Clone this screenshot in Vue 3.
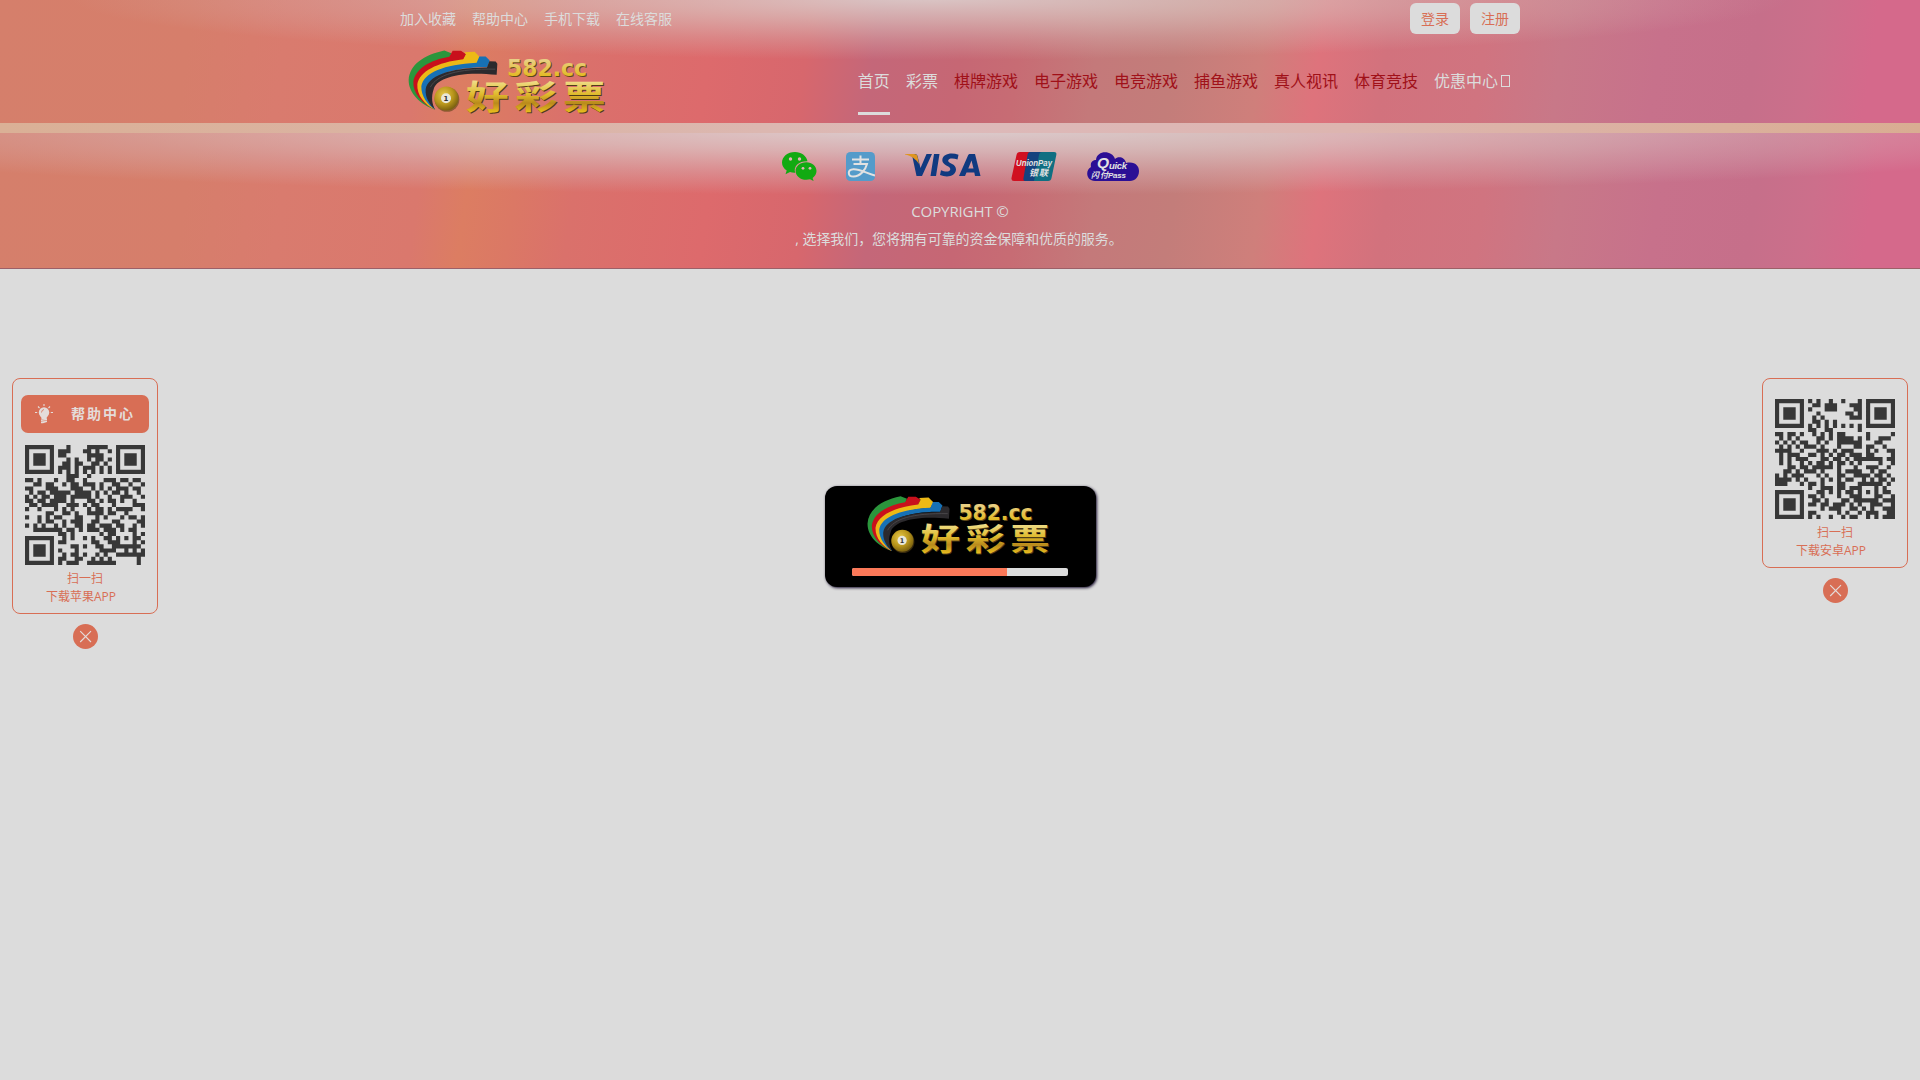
<script setup>
import { h } from 'vue'

const topLinks = ['加入收藏', '帮助中心', '手机下载', '在线客服']
const navItems = [
  { label: '首页', active: true },
  { label: '彩票' },
  { label: '棋牌游戏', hot: true },
  { label: '电子游戏', hot: true },
  { label: '电竞游戏', hot: true },
  { label: '捕鱼游戏', hot: true },
  { label: '真人视讯', hot: true },
  { label: '体育竞技', hot: true },
  { label: '优惠中心', more: true }
]

const iosCode = [
  '11111110001000011111001111111',
  '10000010111000110100101000001',
  '10111010110000011110001011101',
  '10111010001010010110101011101',
  '10111010011011001101001011101',
  '10000010111010111010101000001',
  '11111110101010101010101111111',
  '00000000001110010000000000000',
  '11010001001100100001110110110',
  '00110110010110111010011001001',
  '11000111000111001010101110110',
  '01011011111011110101011010010',
  '10101101110111110100100111001',
  '11011011110100011010110100100',
  '01101111001110101100010000111',
  '10010001010100010110101111001',
  '00000110011010011110110010000',
  '10010101100011000101000101101',
  '00010110010111001100011000011',
  '10101001010011011011101100101',
  '00111111101101011101110101100',
  '00000000110100000010110000101',
  '11111110010100101001101010110',
  '10000010110000001100111000101',
  '10111010000110100110011111110',
  '10111010100010000011110010101',
  '10111010010110100101001111111',
  '10000010110011001010100000010',
  '11111110101110011111110000010'
]
const androidCode = [
  '11111110101001001000101111111',
  '10000010011011100011101000001',
  '10111010100011100001101011101',
  '10111010001000000110101011101',
  '10111010010100000011101011101',
  '10000010011010100000001000001',
  '11111110101010101010101111111',
  '00000000110011000000100000000',
  '11011010010101011000001000001',
  '01010100001101011110101001110',
  '10101011001010011111100011000',
  '01010101110100010001101100100',
  '11110010001110101110001010011',
  '01011100110101011011101100001',
  '01010111000110110101111111011',
  '01010010101101011010100001001',
  '00011011011111010001001110010',
  '00110101110100010111100101100',
  '10101110001010011001111011010',
  '11110101000101010110010101101',
  '11100010110100011000111111010',
  '00000000100111011011100010100',
  '11111110001101010110101010110',
  '10000010110100010011100011001',
  '10111010011010001101111110111',
  '10111010110110111010100111001',
  '10111010000101110011010100111',
  '10000010110000010100101110011',
  '11111110101001001011001010111'
]

const toPath = (rows) =>
  rows
    .flatMap((row, y) => [...row].map((c, x) => (c === '1' ? `M${x} ${y}h1v1h-1z` : '')))
    .join('')

const QrCode = (props) =>
  h('svg', { viewBox: '0 0 29 29', width: 120, height: 120, style: 'display:block' }, [
    h('path', { d: toPath(props.rows), fill: '#383838' })
  ])
QrCode.props = ['rows']
</script>

<template>
  <div class="page">
    <svg class="defs" width="0" height="0">
      <defs>
        <linearGradient id="gold" x1="0" y1="0" x2="0" y2="1">
          <stop offset=".15" stop-color="#f3e6a0" />
          <stop offset=".5" stop-color="#dfba2c" />
          <stop offset=".68" stop-color="#b98a1c" />
          <stop offset=".9" stop-color="#efc51f" />
        </linearGradient>
        <linearGradient id="goldNum" x1="0" y1="0" x2="0" y2="1">
          <stop offset=".2" stop-color="#e8cf83" />
          <stop offset=".9" stop-color="#e2b50f" />
        </linearGradient>
        <radialGradient id="ball" cx=".4" cy=".35" r=".65">
          <stop offset="0" stop-color="#e6c84a" />
          <stop offset=".6" stop-color="#b8951b" />
          <stop offset="1" stop-color="#7d6310" />
        </radialGradient>
        <symbol id="brand" viewBox="80 148 600 197">
          <path fill="#2b963c" d="M165 330C120 315 84 280 85 240C88 195 130 165 192 152L213 160L206 178C150 190 110 220 112 250C115 290 140 315 165 330Z" />
          <path fill="#c9101c" d="M165 330C125 312 97 280 99 246C104 208 150 180 207 171L217 153L242 153L257 163L248 182C180 190 122 220 124 252C126 290 145 315 165 330Z" />
          <path fill="#edb916" d="M165 330C132 314 109 285 111 253C117 215 170 187 249 178L257 163L252 157L283 156L299 172L289 190C200 194 138 222 137 254C136 290 150 315 165 330Z" />
          <path fill="#1771b5" d="M165 330C142 314 122 290 123 259C131 219 190 194 289 189L297 170L316 170L328 182L321 202C220 200 150 228 148 260C147 290 155 315 165 330Z" />
          <path fill="#2c2a2d" d="M165 330C148 314 134 294 136 268C144 230 200 204 320 203L327 184L346 185L351 192L349 225C230 212 167 238 160 268C152 290 155 315 165 330Z" />
          <path fill="none" stroke="#4a484b" stroke-width="3" d="M150 262C170 225 230 206 345 208" />
          <circle cx="200" cy="299" r="37" fill="#5b4416" opacity=".6" />
          <circle cx="198" cy="296" r="36" fill="url(#ball)" />
          <circle cx="197" cy="295" r="15" fill="#e9e7da" />
          <text x="197" y="303" text-anchor="middle" font-family="'DejaVu Sans'" font-weight="700" font-size="21" fill="#333">1</text>
          <g font-family="'DejaVu Sans', sans-serif" font-weight="700" font-size="70">
            <text x="383" y="233" textLength="240" lengthAdjust="spacingAndGlyphs" fill="#5c4718">582.cc</text>
            <text x="380" y="230" textLength="240" lengthAdjust="spacingAndGlyphs" fill="url(#goldNum)">582.cc</text>
          </g>
          <g font-family="'Noto Sans CJK SC', sans-serif" font-weight="700" font-size="100">
            <text transform="translate(3 3) scale(1.28 1)" x="201 315 428" y="327" fill="#4f3c18">好彩票</text>
            <text transform="scale(1.28 1)" x="201 315 428" y="327" fill="url(#gold)">好彩票</text>
          </g>
        </symbol>
      </defs>
    </svg>

    <header class="header art">
      <div class="wrap topbar">
        <div class="links">
          <a v-for="t in topLinks" :key="t">{{ t }}</a>
        </div>
        <div class="auth">
          <button>登录</button>
          <button>注册</button>
        </div>
      </div>
      <div class="wrap main">
        <svg class="logo" width="200" height="66"><use href="#brand" /></svg>
        <nav>
          <a v-for="n in navItems" :key="n.label" :class="{ active: n.active, hot: n.hot }">{{ n.label }}<i v-if="n.more" class="more"></i></a>
        </nav>
      </div>
    </header>

    <div class="band"></div>

    <footer class="footer art">
      <div class="pay">
        <svg class="wechat" width="35" height="29" viewBox="0 0 35 29">
          <path fill="#12aa12" d="M13 0C5.500 0 0 4.700 0 10.500c0 3.400 1.900 6.200 4.700 8.100L3.500 22.300l4.500-2.200c1.800.5 3.400.7 5.200.6C11 14 17 9 25.500 9.200 24.500 3.800 19.300 0 13 0Z" />
          <path fill="#12aa12" d="M24.300 10.200c-6.200 0-10.700 4-10.700 8.700 0 5 5 8.900 10.700 8.900 1.300 0 2.500-.2 3.700-.5l3.600 1.600-1-3c2.300-1.700 3.900-4.100 3.900-7 0-4.900-4.600-8.700-10.200-8.700Z" />
          <g fill="#e2b5b6"><circle cx="8.500" cy="7" r="1.700" /><circle cx="17.500" cy="7" r="1.700" /><circle cx="21" cy="16.300" r="1.400" /><circle cx="28" cy="16.300" r="1.400" /></g>
        </svg>
        <svg class="alipay" width="29" height="29" viewBox="0 0 29 29">
          <rect width="29" height="29" rx="4.500" fill="#549bca" />
          <path fill="none" stroke="#e2e2e2" stroke-width="2" d="M6 7.500H23M14.500 3.500V12M7.500 12H21C19.500 18 14 24.500 7.500 24.500C1.500 24.500 1 17.500 7.500 17.200C14 17 20 21 29 23.500" />
        </svg>
        <svg class="visa" width="76" height="24" viewBox="0 0 76 24">
          <path fill="#103a80" d="M7 2L11.500 23H17L27 1H21.500L15.500 15L12.500 3C12 1.500 11 1 9.500 1ZM29 1H34.500L31 23H25.500ZM53.500 1.800C46 -1 37.500 1 37.300 7.200C37.200 12.500 45.500 13 45.300 16.200C45 19.500 39.500 18.800 36 17.200L35 22C42 24.800 50.500 23.500 51 16.500C51.200 10.500 43 10.500 43.200 7.600C43.500 4.800 48.500 5 52.500 6.500ZM65 1H70L75.500 23H70L69.300 19.500H61.500L60 23H54L63 2.500C63.400 1.500 64 1 65 1ZM66.500 7.500L63.300 15.500H68.500Z" />
          <path fill="#df9520" d="M0 1H9C11 1 12 1.700 12.500 3.500L14 11C11 6 6 2.800 0 1.500Z" />
        </svg>
        <svg class="union" width="46" height="29" viewBox="0 0 46 29">
          <path fill="#d01020" d="M9 0H21L15 29H3Q0 29 .5 26L5.500 3Q6 0 9 0Z" />
          <path fill="#14427e" d="M19 0H33L27 29H14Q12 29 12.500 26L16.500 3Q17 0 19 0Z" />
          <path fill="#0f6f82" d="M31 0H43Q46 0 45.300 3L40.500 26Q40 29 37 29H23L28 3Q28.500 0 31 0Z" />
          <g fill="#e2e2e2" font-family="'Liberation Sans','Noto Sans CJK SC',sans-serif" font-weight="700" font-style="italic">
            <text x="5" y="14" font-size="9" textLength="36" lengthAdjust="spacingAndGlyphs">UnionPay</text>
            <text x="18" y="23.500" font-size="9" textLength="19">银联</text>
          </g>
        </svg>
        <svg class="quick" width="52" height="29" viewBox="0 0 52 29">
          <path fill="#2b0f95" d="M8 29C-1 29-2 18 4 15C3 10 6 8 9 8C10-2 25-2 28 7C31 4 38 5 39 11C48 9 52 14 52 19C52 25 48 29 43 29Z" />
          <g fill="#e2e2e2" font-family="'Liberation Sans','Noto Sans CJK SC',sans-serif" font-weight="700" font-style="italic">
            <text x="10" y="15.500" font-size="15.500">Q</text>
            <text x="22" y="16.500" font-size="9.500" textLength="18">uick</text>
            <text x="4" y="25.500" font-size="8" textLength="17">闪付</text>
            <text x="21" y="25.500" font-size="8" textLength="18">Pass</text>
          </g>
        </svg>
      </div>
      <p class="copy">COPYRIGHT ©</p>
      <p class="slogan">, 选择我们，您将拥有可靠的资金保障和优质的服务。</p>
    </footer>

    <aside class="side left">
      <div class="card">
        <a class="help">
          <svg width="18" height="20" viewBox="0 0 18 20">
            <circle cx="9" cy="8.500" r="5.200" fill="#e4dcda" />
            <path fill="#e4dcda" d="M6 12H12L11.500 15H6.500ZM6 15.500L12 14.800V16.200L6 17ZM6 17.500L12 16.800V18L8 19.300H6Z" />
            <path stroke="#e4dcda" stroke-width="1.100" d="M9 0V2M3 2.500L4.500 4M15 2.500L13.500 4M0 8.500H2.200M15.800 8.500H18" />
            <path stroke="#d86e55" fill="none" stroke-width=".8" d="M6.500 8.500Q6.500 6 9 5.500" />
          </svg>
          <span>帮助中心</span>
        </a>
        <QrCode :rows="iosCode" />
        <div class="cap">扫一扫</div>
        <div class="cap app">下载苹果APP</div>
      </div>
      <svg class="close" width="25" height="25" viewBox="0 0 25 25"><circle cx="12.500" cy="12.500" r="12.500" fill="#d86e55" /><path d="M7.200 7.200L18 18M18 7.200L7.200 18" stroke="#e4dcda" stroke-width="1.100" /></svg>
    </aside>

    <aside class="side right">
      <div class="card">
        <QrCode :rows="androidCode" />
        <div class="cap">扫一扫</div>
        <div class="cap app">下载安卓APP</div>
      </div>
      <svg class="close" width="25" height="25" viewBox="0 0 25 25"><circle cx="12.500" cy="12.500" r="12.500" fill="#d86e55" /><path d="M7.200 7.200L18 18M18 7.200L7.200 18" stroke="#e4dcda" stroke-width="1.100" /></svg>
    </aside>

    <div class="loading">
      <svg class="mark" width="185" height="61"><use href="#brand" /></svg>
      <div class="bar"><div :style="{ width: '71.8%' }"></div></div>
    </div>
  </div>
</template>

<style>
body { background: #dcdcdc; }
</style>

<style scoped>
.page {
  position: relative;
  height: 1080px;
  overflow: hidden;
  background: #dcdcdc;
  color: #dcdcdc;
  font-family: 'Open Sans', 'Noto Sans CJK SC', sans-serif;
}
.page * { box-sizing: border-box; }
.defs { position: absolute; }
.art {
  --base: linear-gradient(98deg, #d57f6b 0, #d67e6b 10%, #d97b6e 15%, #da786d 22%, #dc7d62 24.500%, #db7865 27%, #da716b 30%, #dd6a6c 37%, #d7676d 42%, #c46779 45.500%, #c66774 50%, #c76c74 53%, #c4797a 57%, #c37d7a 61%, #cf7f7b 65.500%, #de737c 68.500%, #d2727d 72%, #d07480 77%, #c87888 81%, #c7718b 86%, #c66f8a 91%, #cc6f8b 94%, #d5698b 97%);
}
.header {
  height: 123px;
  background:
    radial-gradient(ellipse 860px 62px at 930px -2px, rgba(220, 208, 206, .9), rgba(218, 196, 192, .68) 35%, rgba(215, 180, 178, .38) 68%, rgba(215, 170, 170, 0)),
    var(--base);
}
.band {
  height: 10px;
  background: linear-gradient(90deg, #dab096, #dbb5a8 30%, #ddb9b9 50%, #ddb5b0 70%, #dbb09c 90%, #d9ad92);
}
.wrap { width: 1120px; margin: 0 auto; display: flex; justify-content: space-between; }
.topbar { height: 37px; padding-top: 3px; }
.links { display: flex; gap: 16px; font-size: 14px; line-height: 32px; }
.auth { display: flex; gap: 10px; }
button {
  width: 50px;
  height: 31px;
  padding: 0;
  border: 0;
  border-radius: 6px;
  background: #dcdcdc;
  color: #d86e55;
  font: 14px/31px 'Noto Sans CJK SC', sans-serif;
}
.main { padding: 10px 8px 0 7px; }
.logo { margin-top: 2px; }
nav { display: flex; gap: 16px; font-size: 16px; }
nav a { height: 68px; line-height: 68px; display: flex; align-items: center; }
nav .active { box-shadow: inset 0 -3px #dcdcdc; }
nav .hot { color: #a01018; }
.more { width: 9px; height: 12px; margin: 0 2px 0 3px; border: 1px solid #dcdcdc; }
.footer {
  height: 136px;
  padding-top: 19px;
  border-bottom: 1px solid #9c6068;
  text-align: center;
  background:
    radial-gradient(ellipse 1250px 66px at 940px -4px, rgba(221, 212, 212, .95), rgba(219, 200, 200, .74) 35%, rgba(216, 182, 186, .42) 68%, rgba(215, 170, 180, 0)),
    var(--base);
}
.pay { display: flex; width: 357px; height: 29px; margin: 0 auto; padding-left: 0; position: relative; justify-content: space-between; }
.visa { margin-top: 1px; }
p { margin: 0; }
.copy { margin-top: 17px; font-size: 15px; line-height: 26px; letter-spacing: -.1px; }
.slogan { margin-top: 1px; padding-right: 2px; font-size: 14px; line-height: 28px; letter-spacing: -.08px; }
.side { position: absolute; top: 378px; width: 146px; }
.left { left: 12px; }
.right { right: 12px; }
.card {
  display: flex;
  flex-direction: column;
  align-items: center;
  border: 1px solid #d86e55;
  border-radius: 8px;
  color: #d86e55;
  font-size: 12px;
  line-height: 18px;
  padding: 20px 8px 7px;
}
.left .card { padding-top: 16px; }
.help {
  display: flex;
  align-items: center;
  width: 128px;
  height: 38px;
  margin-bottom: 12px;
  padding-left: 14px;
  border-radius: 7px;
  background: #d86e55;
  color: #e4dcda;
  font-size: 14px;
  font-weight: 700;
  letter-spacing: 2px;
}
.help span { margin-left: 18px; white-space: nowrap; }
.cap { margin-top: 5px; }
.cap.app { margin: 0 8px 0 0; }
.close { display: block; margin: 10px auto 0; }
.loading {
  position: absolute;
  left: 825px;
  top: 486px;
  width: 271px;
  height: 101px;
  padding: 9px 0 0 27px;
  border-radius: 12px;
  background: #000;
  box-shadow: 1px 1px 3px #1a1030;
  display: flex;
  flex-direction: column;
  align-items: flex-start;
}
.mark { margin-left: 14px; }
.bar { width: 216px; height: 8px; margin-top: 12px; border-radius: 2px; overflow: hidden; background: #dcdcdc; }
.bar div { height: 100%; background: #fb7858; }
</style>
